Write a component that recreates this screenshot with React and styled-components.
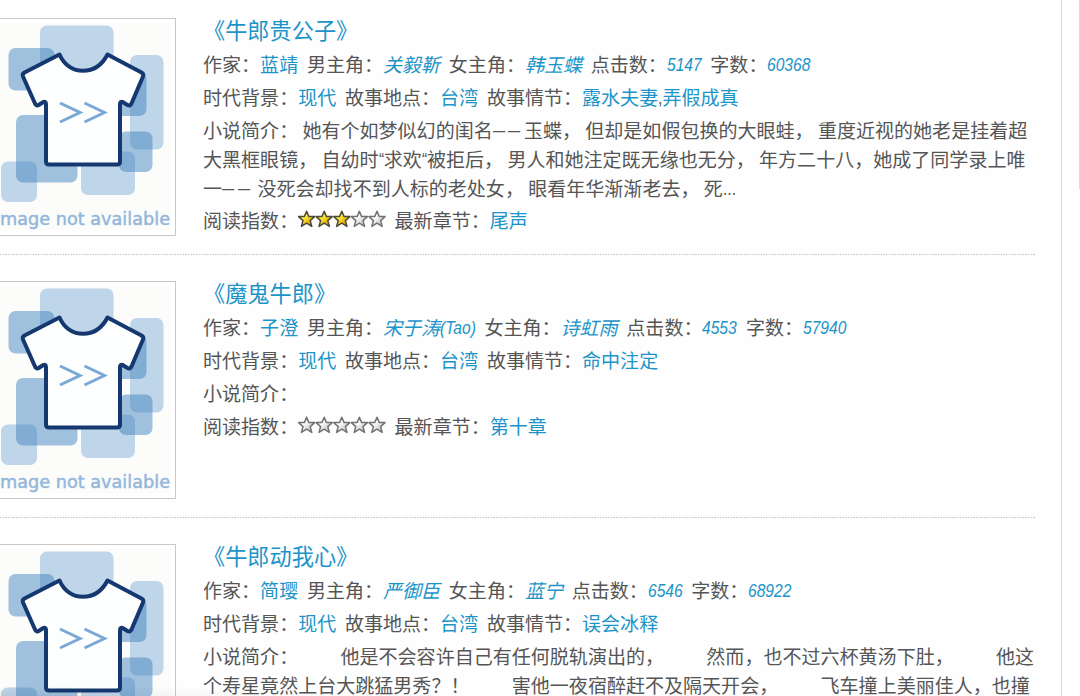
import React from 'react';
import styled, { createGlobalStyle } from 'styled-components';

const GlobalStyle = createGlobalStyle`
  * {
    box-sizing: border-box;
  }

  body {
    margin: 0;
    background: #fff;
    overflow: hidden;
  }
`;

const Page = styled.div`
  position: relative;
  display: flex;
  width: 1080px;
  height: 696px;
  overflow: hidden;
  background: #fefefe;
  color: #555;
  font-family: 'Noto Sans CJK SC', sans-serif;
  font-size: 19.05px;
  line-height: 28.6px;
  text-spacing-trim: space-all;

  /* soft shade along the bottom left edge */
  &::after {
    content: '';
    position: absolute;
    left: 0;
    bottom: 0;
    width: 320px;
    height: 10px;
    background: radial-gradient(ellipse at bottom left, rgba(0, 0, 0, 0.06), transparent 75%);
  }
`;

const Main = styled.main`
  width: 1062px;
  flex-shrink: 0;
  border-right: 1px solid #d9d9d9;
`;

const SideRail = styled.aside`
  width: 18px;
  height: 189px;
  flex-shrink: 0;
  border-right: 1px solid #dcdcdc;
`;

const BookList = styled.ul`
  list-style: none;
  width: 1036px;
  margin: -8px 0 0;
  padding: 0;
`;

const BookItem = styled.li`
  display: flex;
  height: 263px;
  padding-top: 26px;
  background: repeating-linear-gradient(90deg, #c4c4c4 0 0.9px, #fafafa 1.7px 2.3px, #c4c4c4 2.727px) left bottom / 100% 1px no-repeat;
`;

const Cover = styled.a`
  display: block;
  width: 176px;
  height: 218px;
  flex-shrink: 0;
  border: 1px solid #c8c8c8;
  border-left: none;
  background: #fff;

  svg {
    display: block;
  }
`;

const Info = styled.div`
  flex: 1;
  padding-left: 27px;
  white-space: nowrap;
`;

const Title = styled.h3`
  margin: -5px 0 5.2px;
  font-size: 22.2px;
  font-weight: 400;
  line-height: 32px;
  color: #1c94c8;
`;

const Row = styled.div`
  display: flex;
  height: 28.6px;
  margin-bottom: 4.5px;
`;

const Field = styled.span`
  white-space: pre;
  margin-right: 8.7px;
`;

const Link = styled.a`
  color: #1c94c8;
  font-style: ${(props) => (props.$italic ? 'italic' : 'normal')};
`;

const Summary = styled.div`
  margin-bottom: 3.9px;
  white-space: pre;
`;

const SummaryLine = styled.p`
  height: 28.6px;
  margin: 0;
`;

const Condensed = styled.span`
  display: inline-block;
  width: ${(props) => props.$width}px;
  font-family: 'Liberation Sans', sans-serif;
  line-height: 20px;
  transform: translateY(${(props) => props.$lift || 0}px) scaleX(${(props) => props.$scale || 0.82});
  transform-origin: left;
`;

const Stars = styled.span`
  display: inline-flex;
  height: 18px;
  margin: 3.8px 8.4px 0 0;
`;

// advance widths in em of the latin glyphs that appear in the texts
const advance = { '(': 0.333, ')': 0.333, T: 0.5, '“': 0.333, ',': 0.278, '.': 0.278 };

const latinWidth = (text) =>
  [...text].reduce((sum, ch) => sum + (advance[ch] || 0.556), 0) * 19.05 * 0.82;

const MixedText = ({ children }) =>
  children.split(/([\w().,“]+|—)/).filter(Boolean).map((part, i) => {
    if (part === '—') {
      return <Condensed key={i} $width={15.6} $scale={0.64} $lift={-1.6}>{part}</Condensed>;
    }
    if (/^[\w().,“]+$/.test(part)) {
      return <Condensed key={i} $width={latinWidth(part)} $lift={-0.7}>{part}</Condensed>;
    }
    return <React.Fragment key={i}>{part}</React.Fragment>;
  });

const starPath = 'M9 1.2 L11.2 6.4 L17 6.6 L12.6 10.6 L14.2 16.4 L9 13.2 L3.8 16.4 L5.4 10.6 L1 6.6 L6.8 6.4 Z';

const Rating = ({ value }) => (
  <Stars>
    <svg width="88" height="18" viewBox="0 0 88 18">
      <defs>
        <linearGradient id="gold" x1="0" y1="0" x2="1" y2="1">
          <stop offset="0.35" stopColor="#fdf03c" />
          <stop offset="0.8" stopColor="#dfa000" />
        </linearGradient>
        <linearGradient id="silver" x1="0" y1="0" x2="1" y2="1">
          <stop offset="0.35" stopColor="#fff" />
          <stop offset="0.9" stopColor="#bdbdbd" />
        </linearGradient>
      </defs>
      {[0, 1, 2, 3, 4].map((i) => (
        <path
          key={i}
          d={starPath}
          transform={`translate(${i * 17.6 - 0.4} 0)`}
          fill={i < value ? 'url(#gold)' : 'url(#silver)'}
          stroke={i < value ? '#4d4839' : '#727272'}
          strokeWidth="1.5"
          strokeLinejoin="round"
        />
      ))}
    </svg>
  </Stars>
);

const NoImage = () => (
  <svg width="175" height="216" viewBox="0 19 175 216">
    <rect x="0" y="23" width="170" height="207" fill="#fcfdfb" />
    <g fill="#6f9fd0" fillOpacity="0.43">
      <rect x="40" y="25.5" width="73.5" height="45" rx="7" />
      <rect x="130" y="55" width="33.5" height="94.5" rx="7" />
      <rect x="81" y="151.5" width="54" height="43.5" rx="7" />
      <rect x="1" y="161.5" width="36" height="40.5" rx="7" />
    </g>
    <g fill="#4485c0" fillOpacity="0.5">
      <rect x="8.5" y="48" width="46" height="42.5" rx="7" />
      <rect x="112" y="72" width="34.5" height="44" rx="7" />
      <rect x="119" y="131.5" width="33.5" height="40.5" rx="7" />
      <rect x="16" y="115" width="61.5" height="67.5" rx="7" />
    </g>
    <path
      d="M59.5 54.5 C64 65 73 70.8 83 70.8 C93 70.8 102 65 107.5 54.5 L141.5 72.5 Q144 74 143 76.5 L131.5 103.5 Q130 106.5 127.5 105 L123 102.2 Q120 101 120 104 V161.5 Q120 164.5 117 164.5 H49 Q46 164.5 46 161.5 V104 Q46 101 43 102.2 L39 104.8 Q36.5 106.5 35 103.5 L23 76.5 Q22 74 24.5 72.5 Z"
      fill="#fdfefe"
      stroke="#14386f"
      strokeWidth="4"
      strokeLinejoin="round"
    />
    <path d="M60 103 L80 112.5 L60 122 M84.5 103 L104.5 112.5 L84.5 122" fill="none" stroke="#7aa8d6" strokeWidth="3" />
    <text
      x="0"
      y="225"
      textLength="170"
      lengthAdjust="spacingAndGlyphs"
      fontFamily="DejaVu Sans, sans-serif"
      fontSize="18"
      fill="#94b7dc"
      stroke="#94b7dc"
      strokeWidth="0.5"
    >
      mage not available
    </text>
  </svg>
);

const books = [
  {
    title: '《牛郎贵公子》',
    author: '蓝靖',
    hero: '关毅靳',
    heroine: '韩玉蝶',
    clicks: '5147',
    words: '60368',
    plot: ['露水夫妻', '弄假成真'],
    summary: [
      '小说简介： 她有个如梦似幻的闺名——玉蝶， 但却是如假包换的大眼蛙， 重度近视的她老是挂着超',
      '大黑框眼镜， 自幼时“求欢“被拒后， 男人和她注定既无缘也无分， 年方二十八，她成了同学录上唯',
      '一—— 没死会却找不到人标的老处女， 眼看年华渐渐老去， 死...',
    ],
    rating: 3,
    latest: '尾声',
  },
  {
    title: '《魔鬼牛郎》',
    author: '子澄',
    hero: '宋于涛(Tao)',
    heroine: '诗虹雨',
    clicks: '4553',
    words: '57940',
    plot: ['命中注定'],
    summary: ['小说简介：'],
    rating: 0,
    latest: '第十章',
  },
  {
    title: '《牛郎动我心》',
    author: '简璎',
    hero: '严御臣',
    heroine: '蓝宁',
    clicks: '6546',
    words: '68922',
    plot: ['误会冰释'],
    summary: [
      '小说简介： \u3000\u3000他是不会容许自己有任何脱轨演出的， \u3000\u3000然而，也不过六杯黄汤下肚， \u3000\u3000他这',
      '个寿星竟然上台大跳猛男秀？！ \u3000\u3000害他一夜宿醉赶不及隔天开会， \u3000\u3000飞车撞上美丽佳人，也撞',
    ],
    rating: 0,
    latest: '',
  },
];

const Book = ({ book }) => (
  <BookItem>
    <Cover>
      <NoImage />
    </Cover>
    <Info>
      <Title>{book.title}</Title>
      <Row>
        <Field>作家：<Link>{book.author}</Link></Field>
        <Field>男主角：<Link $italic><MixedText>{book.hero}</MixedText></Link></Field>
        <Field>女主角：<Link $italic>{book.heroine}</Link></Field>
        <Field>点击数：<Link $italic><MixedText>{book.clicks}</MixedText></Link></Field>
        <Field>字数：<Link $italic><MixedText>{book.words}</MixedText></Link></Field>
      </Row>
      <Row>
        <Field>时代背景：<Link>现代</Link></Field>
        <Field>故事地点：<Link>台湾</Link></Field>
        <Field>
          故事情节：
          {book.plot.map((name, i) => (
            <React.Fragment key={name}>
              {i > 0 && <MixedText>,</MixedText>}
              <Link>{name}</Link>
            </React.Fragment>
          ))}
        </Field>
      </Row>
      <Summary>
        {book.summary.map((line) => (
          <SummaryLine key={line}><MixedText>{line}</MixedText></SummaryLine>
        ))}
      </Summary>
      {book.latest && (
        <Row>
          <span>阅读指数：</span>
          <Rating value={book.rating} />
          <Field>最新章节：<Link>{book.latest}</Link></Field>
        </Row>
      )}
    </Info>
  </BookItem>
);

const App = () => (
  <>
    <GlobalStyle />
    <Page>
      <Main>
        <BookList>
          {books.map((book) => (
            <Book key={book.title} book={book} />
          ))}
        </BookList>
      </Main>
      <SideRail />
    </Page>
  </>
);

export default App;
